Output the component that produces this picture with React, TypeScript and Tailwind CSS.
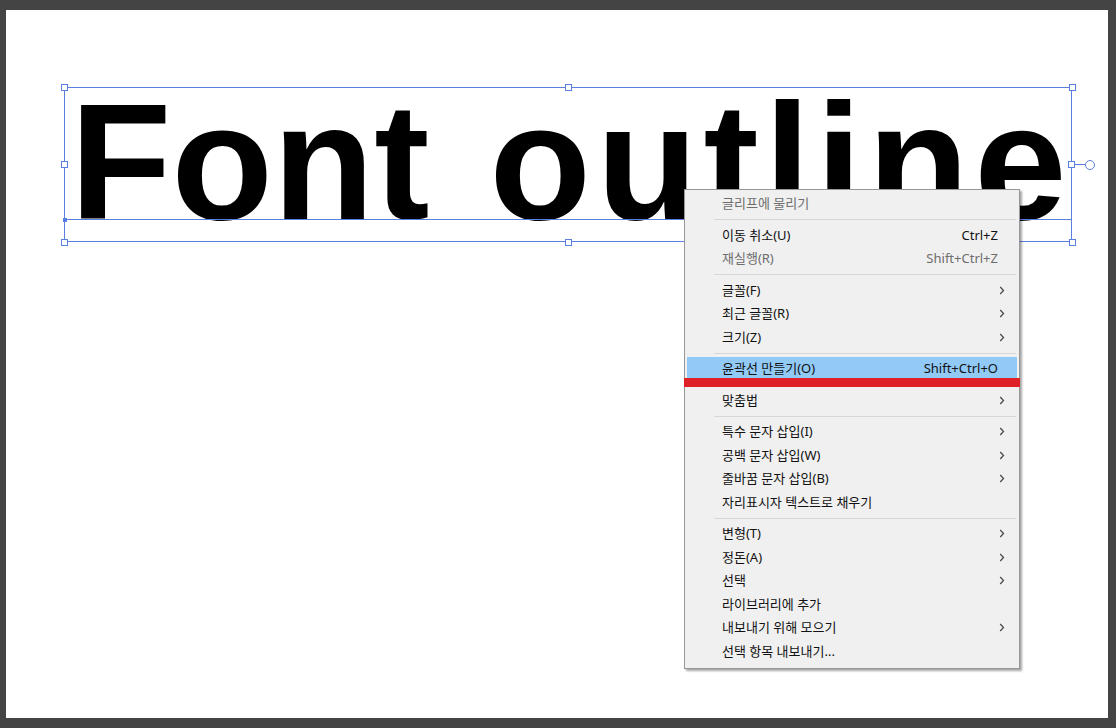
import React from "react";

type Item =
  | { kind: "sep" }
  | {
      kind: "item";
      label: string;
      shortcut?: string;
      sub?: boolean;
      disabled?: boolean;
      highlight?: boolean;
    };

const items: Item[] = [
  { kind: "item", label: "글리프에 물리기", disabled: true },
  { kind: "sep" },
  { kind: "item", label: "이동 취소(U)", shortcut: "Ctrl+Z" },
  { kind: "item", label: "재실행(R)", shortcut: "Shift+Ctrl+Z", disabled: true },
  { kind: "sep" },
  { kind: "item", label: "글꼴(F)", sub: true },
  { kind: "item", label: "최근 글꼴(R)", sub: true },
  { kind: "item", label: "크기(Z)", sub: true },
  { kind: "sep" },
  { kind: "item", label: "윤곽선 만들기(O)", shortcut: "Shift+Ctrl+O", highlight: true },
  { kind: "sep" },
  { kind: "item", label: "맞춤법", sub: true },
  { kind: "sep" },
  { kind: "item", label: "특수 문자 삽입(I)", sub: true },
  { kind: "item", label: "공백 문자 삽입(W)", sub: true },
  { kind: "item", label: "줄바꿈 문자 삽입(B)", sub: true },
  { kind: "item", label: "자리표시자 텍스트로 채우기" },
  { kind: "sep" },
  { kind: "item", label: "변형(T)", sub: true },
  { kind: "item", label: "정돈(A)", sub: true },
  { kind: "item", label: "선택", sub: true },
  { kind: "item", label: "라이브러리에 추가" },
  { kind: "item", label: "내보내기 위해 모으기", sub: true },
  { kind: "item", label: "선택 항목 내보내기..." },
];

function Chevron() {
  return (
    <svg width="6" height="9" viewBox="0 0 6 9" className="shrink-0">
      <polyline points="1.2,1 4.5,4.5 1.2,8" fill="none" stroke="#4a4a4a" strokeWidth="1.3" />
    </svg>
  );
}

function Handle() {
  return <div className="w-[7px] h-[7px] bg-white border border-[#5b7fe0] shrink-0" />;
}

function MenuList() {
  return (
    <div
      className="absolute left-[678px] top-[179px] w-[336px] bg-[#f0f0f0] border border-[#979797] shadow-[2px_2px_2px_rgba(0,0,0,0.35)] pt-[2px] pb-[5px] text-[13px] flex flex-col"
      style={{ fontFamily: '"Noto Sans", "Noto Sans CJK KR", sans-serif' }}
    >
      {items.map((it, i) =>
        it.kind === "sep" ? (
          <div key={i} className="h-[8px] flex items-center pl-[29px] pr-[3px]">
            <div className="h-px w-full bg-[#d7d7d7]" />
          </div>
        ) : (
          <div key={i} className="h-[23.5px] px-[2px] flex items-stretch">
            <div
              className={`flex-1 flex items-center pl-[35px] pr-[12px] ${
                it.highlight ? "bg-[#91c9f7]" : ""
              } ${it.disabled ? "text-[#6d6d6d]" : "text-[#111111]"}`}
            >
              <span className="flex-1 whitespace-nowrap">{it.label}</span>
              {it.shortcut && <span className="whitespace-nowrap pr-[7px]">{it.shortcut}</span>}
              {it.sub && <Chevron />}
            </div>
          </div>
        )
      )}
      {/* red annotation bar */}
      <div className="absolute left-[-1px] right-[-1px] top-[188px] h-[9px] bg-[#e02027]" />
    </div>
  );
}

export default function App() {
  return (
    <div className="w-[1116px] h-[728px] bg-[#444444] pt-[10px] pl-[6px] pr-[8px] pb-[10px]">
      <div className="relative w-full h-full bg-white overflow-hidden">
        {/* selected text object on the artboard */}
        <div className="absolute left-[58px] top-[77px] w-[1008px] h-[155px] border border-[#5b7fe0] pl-[5px]">
          <div
            className="mt-[-9.5px] whitespace-pre text-black font-bold leading-none text-[166px]"
            style={{ fontFamily: '"Liberation Sans", Arial, sans-serif' }}
          >
            <span>Font</span>
            <span> </span>
            <span className="ml-[14px] tracking-[5.5px]">outline</span>
          </div>

          {/* baseline */}
          <div className="absolute left-0 right-0 top-[131px] h-px bg-[#5b7fe0]" />
          <div className="absolute left-[-2.5px] top-[129.5px] w-[4px] h-[4px] bg-[#5b7fe0]" />

          {/* handles */}
          <div className="absolute inset-[-4.5px] flex flex-col justify-between">
            <div className="flex justify-between">
              <Handle />
              <Handle />
              <Handle />
            </div>
            <div className="flex justify-between items-center">
              <Handle />
              <div className="flex items-center mr-[-19px]">
                <Handle />
                <div className="w-[10px] h-px bg-[#5b7fe0]" />
                <div className="w-[10px] h-[10px] rounded-full bg-white border border-[#5b7fe0]" />
              </div>
            </div>
            <div className="flex justify-between">
              <Handle />
              <Handle />
              <Handle />
            </div>
          </div>
        </div>

        <MenuList />
      </div>
    </div>
  );
}
